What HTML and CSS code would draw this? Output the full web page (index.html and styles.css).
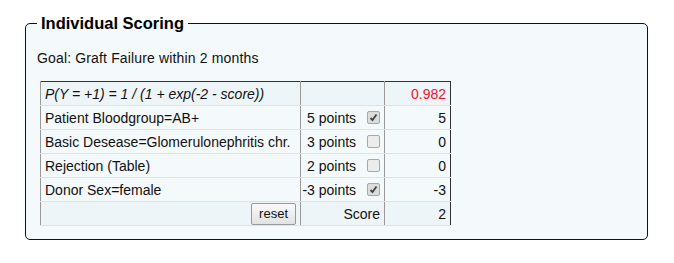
FILE: index.html
```html
<!DOCTYPE html>
<html lang="en">
<head>
  <meta charset="UTF-8" />
  <title>Individual Scoring</title>
  <link rel="stylesheet" href="styles.css">
</head>
<body>
  <fieldset class="scoring">
    <legend>Individual Scoring</legend>
    <p class="goal">Goal: Graft Failure within 2 months</p>
    <table class="score-table">
      <colgroup>
        <col class="col-feature" />
        <col class="col-points" />
        <col class="col-value" />
      </colgroup>
      <tr class="formula">
        <td><i>P(Y = +1) = 1 / (1 + exp(-2 - score))</i></td>
        <td class="points"></td>
        <td class="value prob">0.982</td>
      </tr>
      <tr>
        <td>Patient Bloodgroup=AB+</td>
        <td class="points">5 points <input type="checkbox" checked onclick="return false" /></td>
        <td class="value">5</td>
      </tr>
      <tr>
        <td>Basic Desease=Glomerulonephritis chr.</td>
        <td class="points">3 points <input type="checkbox" onclick="return false" /></td>
        <td class="value">0</td>
      </tr>
      <tr>
        <td>Rejection (Table)</td>
        <td class="points">2 points <input type="checkbox" onclick="return false" /></td>
        <td class="value">0</td>
      </tr>
      <tr>
        <td>Donor Sex=female</td>
        <td class="points">-3 points <input type="checkbox" checked onclick="return false" /></td>
        <td class="value">-3</td>
      </tr>
      <tr class="total">
        <td class="right"><button type="button">reset</button></td>
        <td class="points">Score</td>
        <td class="value">2</td>
      </tr>
    </table>
  </fieldset>
</body>
</html>
```

FILE: styles.css
```css
body {
  font-family: "Liberation Sans", Arial, sans-serif;
  font-size: 14px;
  color: #111;
  background-color: white;
  margin: 8px;
}
.scoring {
  margin: 6px 18px 0 17px;
  padding: 2px 11px 13px 11px;
  border: 1px solid #111;
  border-radius: 5px;
  background-color: #f4f9fb;
}
.scoring legend {
  padding: 0 4px;
  font-size: 16.5px;
  font-weight: bold;
  color: #000;
}
.goal {
  margin: 15px 0 15px 0;
  line-height: 16px;
  letter-spacing: 0.15px;
}
.score-table {
  margin-left: 3px;
  width: 411px;
  table-layout: fixed;
  border-collapse: collapse;
  border-top: 1px solid #333;
  border-left: 1px solid #333;
  border-right: 1px solid #333;
}
.col-feature {
  width: 260px;
}
.col-points {
  width: 84px;
}
.col-value {
  width: 66px;
}
.score-table td {
  height: 23px;
  padding: 0 4px;
  border-bottom: 1px solid #dde3e6;
  border-left: 1px solid #999;
  white-space: nowrap;
}
.score-table td.points {
  padding: 0 4px 0 0;
  text-align: right;
}
.score-table td.value {
  text-align: right;
}
.score-table .right {
  text-align: right;
}
.formula td,
.total td {
  background-color: #eef5f8;
}
.prob {
  color: #f0132a;
}
.points input {
  appearance: none;
  -webkit-appearance: none;
  box-sizing: border-box;
  width: 13px;
  height: 13px;
  margin: 0 0 0 7px;
  vertical-align: -1px;
  border: 1px solid #a8a8a8;
  border-radius: 2px;
  background-color: #ececec;
}
.points input:checked {
  background-color: #dcdcdc;
  background-image: url("data:image/svg+xml,%3Csvg xmlns='http://www.w3.org/2000/svg' width='11' height='11'%3E%3Cpath d='M2.5 6 L4.5 8 L8.5 2.5' fill='none' stroke='%23444' stroke-width='1.8'/%3E%3C/svg%3E");
  background-repeat: no-repeat;
  background-position: center;
}
.total button {
  font-family: "Liberation Sans", Arial, sans-serif;
  font-size: 13px;
  padding: 1px 7px;
  height: 22px;
  border: 1px solid #999;
  border-radius: 2px;
  background: linear-gradient(#fafafa, #e2e2e2);
  color: #111;
}
```
